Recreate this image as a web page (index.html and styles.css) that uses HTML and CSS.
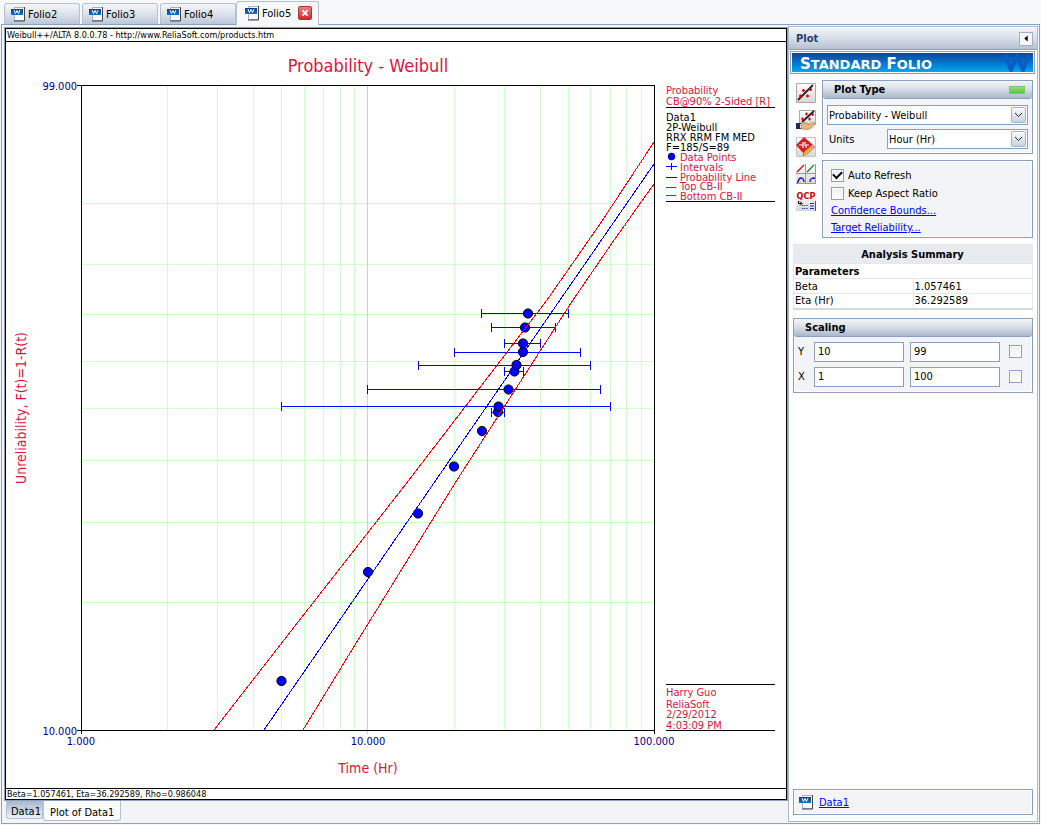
FILE: index.html
```html
<!DOCTYPE html>
<html lang="en">
<head>
  <meta charset="UTF-8" />
  <meta name="viewport" content="width=device-width, initial-scale=1.0"/>
  <title>Weibull++ - Folio5</title>
  <link rel="stylesheet" href="styles.css">
</head>
<body>

  <!-- Shared icons -->
  <svg class="defs" width="0" height="0" aria-hidden="true">
    <defs>
      <linearGradient id="tile" x1="0" y1="0" x2="0" y2="1">
        <stop offset="0" stop-color="#fff"/>
        <stop offset="1" stop-color="#d6d6d6"/>
      </linearGradient>
      <linearGradient id="bluePage" x1="0" y1="0" x2="0" y2="1">
        <stop offset="0" stop-color="#0b3d80"/>
        <stop offset="1" stop-color="#1176c4"/>
      </linearGradient>
      <symbol id="doc" viewBox="0 0 14 16">
        <path d="M3.5 1.5h10v13h-10z" fill="#f6f8fa" stroke="#a9b4be"/>
        <path d="M13.5 1v14H3" fill="none" stroke="#444"/>
        <path d="M0 3h12v6H0z" fill="url(#bluePage)"/>
        <path d="M3 4l1.5 3.500L6 4.500l1.500 3L9 4" fill="none" stroke="#fff"/>
      </symbol>
      <symbol id="line-plot" viewBox="0 0 20 20">
        <path d="M.5.5h19v19H.5z" fill="url(#tile)" stroke="#a9a9a9"/>
        <path d="M2 17L17 2" stroke="#222" stroke-width="1.800"/>
        <path d="M3 13h3M4.500 11.500v3M10 13h3M11.500 11.500v3M6 7.500h3M7.500 6v3M13 6.500h3M14.500 5v3" stroke="#e00000" stroke-width="1.300"/>
      </symbol>
    </defs>
  </svg>

  <div class="tabs">
    <button class="tab"><svg class="doc"><use href="#doc"/></svg>Folio2</button>
    <button class="tab"><svg class="doc"><use href="#doc"/></svg>Folio3</button>
    <button class="tab"><svg class="doc"><use href="#doc"/></svg>Folio4</button>
    <div class="tab active">
      <svg class="doc"><use href="#doc"/></svg>Folio5
      <button class="close" aria-label="Close">
        <svg viewBox="0 0 14 14"><path d="M4 4l6 6M10 4l-6 6" stroke="#fff" stroke-width="2"/></svg>
      </button>
    </div>
  </div>

  <div class="window">
    <div class="sheet">
      <div class="plot">
        <div class="plot-head">Weibull++/ALTA 8.0.0.78 - http://www.ReliaSoft.com/products.htm</div>
        <svg class="chart" viewBox="6 42 779 746" preserveAspectRatio="xMinYMin meet">
          <text class="title" x="368" y="72" text-anchor="middle">Probability - Weibull</text>

          <!-- grid -->
          <path class="grid" d="M167.5 86V730M217.5 86V730M253.5 86V730M281.5 86V730M304.5 86V730M323.5 86V730M340.5 86V730M354.5 86V730M454.5 86V730M504.5 86V730M540.5 86V730M568.5 86V730M590.5 86V730M610.5 86V730M626.500 86V730M641.500 86V730"/>
          <path class="grid" d="M82 203.500H654M82 264.500H654M82 314.500H654M82 361.500H654M82 408.500H654M82 460.500H654M82 522.500H654M82 602.500H654"/>
          <path class="decade" d="M367.500 86V734"/>
          <path class="axis" d="M77 85.500H654.500V734M81.500 85V734M77 730.500H655"/>

          <!-- intervals -->
          <path class="interval" d="M481.500 313.500H568.500M481.500 309V318M568.500 309V318
            M491.500 327.500H555.500M491.500 323V332M555.500 323V332
            M504.500 343.500H540.500M504.500 339V348M540.500 339V348
            M454.500 352.500H580.500M454.500 348V357M580.500 348V357
            M418.500 365.500H590.500M418.500 361V370M590.500 361V370
            M504.500 371.500H523.500M504.500 367V376M523.500 367V376
            M367.500 389.500H600.500M367.500 385V394M600.500 385V394
            M281.500 406.500H610.500M281.500 402V411M610.500 402V411
            M491.500 412.500H504.500M491.500 408V417M504.500 408V417"/>

          <g class="points">
            <circle cx="281.500" cy="681" r="4.600"/>
            <circle cx="368" cy="572" r="4.600"/>
            <circle cx="418" cy="513.500" r="4.600"/>
            <circle cx="454" cy="466.500" r="4.600"/>
            <circle cx="482" cy="431" r="4.600"/>
            <circle cx="498" cy="412" r="4.600"/>
            <circle cx="498.500" cy="406.500" r="4.600"/>
            <circle cx="508.500" cy="389.500" r="4.600"/>
            <circle cx="514.500" cy="371.500" r="4.600"/>
            <circle cx="516.500" cy="365" r="4.600"/>
            <circle cx="523" cy="352" r="4.600"/>
            <circle cx="523" cy="343.500" r="4.600"/>
            <circle cx="525" cy="327.500" r="4.600"/>
            <circle cx="528" cy="313.500" r="4.600"/>
          </g>

          <!-- probability line and bounds -->
          <polyline class="bound" points="214,730 284,640 409,480 547,300 600,224 654,142"/>
          <polyline class="prob" points="264,730 326,640 436,480 560,300 654,164"/>
          <polyline class="bound" points="303,730 358,640 457,480 573,300 612,243 654,184"/>

          <g class="tick">
            <text x="77" y="90" text-anchor="end">99.000</text>
            <text x="77" y="735" text-anchor="end">10.000</text>
            <text x="81" y="745" text-anchor="middle">1.000</text>
            <text x="368" y="745" text-anchor="middle">10.000</text>
            <text x="654" y="745" text-anchor="middle">100.000</text>
          </g>
          <text class="label" x="368" y="773" text-anchor="middle">Time (Hr)</text>
          <text class="label" transform="translate(26 408) rotate(-90)" text-anchor="middle">Unreliability, F(t)=1-R(t)</text>

          <!-- legend -->
          <path class="axis" d="M666 107.500H775M666 201.500H775M666 684.500H775M666 730.500H775"/>
          <g class="legend">
            <text x="666" y="94">Probability</text>
            <text x="666" y="105">CB@90% 2-Sided [R]</text>
            <g class="dark">
              <text x="666" y="121">Data1</text>
              <text x="666" y="131">2P-Weibull</text>
              <text x="666" y="141">RRX RRM FM MED</text>
              <text x="666" y="151">F=185/S=89</text>
            </g>
            <text x="680" y="161">Data Points</text>
            <text x="680" y="171">Intervals</text>
            <text x="680" y="181">Probability Line</text>
            <text x="680" y="190">Top CB-II</text>
            <text x="680" y="200">Bottom CB-II</text>
            <text x="666" y="696">Harry Guo</text>
            <text x="666" y="708">ReliaSoft</text>
            <text x="666" y="718">2/29/2012</text>
            <text x="666" y="729">4:03:09 PM</text>
          </g>
          <circle cx="671.500" cy="156.500" r="3.500" fill="#00f" stroke="#000" stroke-width=".5"/>
          <path class="interval" d="M666 166.500H677M671.500 163V170M666 177.500H677"/>
          <path class="key-bound" d="M666 187.500H676M666 195.500H676"/>
        </svg>
        <div class="plot-foot">Beta=1.057461, Eta=36.292589, Rho=0.986048</div>
      </div>
      <div class="sheet-tabs">
        <button class="sheet-tab">Data1</button>
        <button class="sheet-tab current">Plot of Data1</button>
      </div>
    </div>

    <div class="side">
      <div class="side-head">
        <span>Plot</span>
        <button class="collapse" aria-label="Collapse"><svg viewBox="0 0 14 14"><path d="M9 3v7L5 6.500z"/></svg></button>
      </div>
      <div class="banner">
        <span class="banner-text">S<small>TANDARD</small> F<small>OLIO</small></span>
        <svg class="banner-mark" viewBox="0 0 28 18" aria-hidden="true"><path d="M2 1l6 15L14 2l6 14 6-15" fill="none" stroke="#0a5cc8" stroke-width="4"/></svg>
      </div>

      <div class="controls">
        <div class="tools">
          <button class="tool" aria-label="Plot"><svg viewBox="0 0 20 20"><use href="#line-plot"/></svg></button>
          <button class="tool" aria-label="Send plot">
            <svg viewBox="0 0 20 20">
              <path d="M3.500.500h16v14h-16z" fill="url(#tile)" stroke="#a9a9a9"/>
              <path d="M6 12L18 1" stroke="#222" stroke-width="1.800"/>
              <path d="M5 9h3M6.500 7.500v3M12 9h3M13.500 7.500v3M9 4h3M10.500 2.500v3M15 4.500h3M16.500 3v3" stroke="#e00000" stroke-width="1.200"/>
              <path d="M0 13h5v6H0z" fill="#1d2a5c"/>
              <path d="M4 14h2v4H4z" fill="#fff"/>
              <path d="M5 14l4-1.500 4 2 4-2 2 1-3 4-4 2-7-.5z" fill="#e9b77c" stroke="#a86f38" stroke-width=".6"/>
            </svg>
          </button>
          <button class="tool" aria-label="Plot setup">
            <svg viewBox="0 0 20 20">
              <path d="M.5.500h19v19H.500z" fill="url(#tile)" stroke="#c4c4c4"/>
              <path d="M8 0l9 8-9 9-8-9z" fill="#d11f27"/>
              <path d="M3 8h4V5M7 11V8M9 5v3h4M10 8v3" fill="none" stroke="#fff" stroke-width="1.200"/>
              <path d="M16 8l3 2-8 7-4 2 1-4z" fill="#f7b23c" stroke="#a56a24" stroke-width=".6"/>
              <path d="M16 8l3 2-2 2-3-2z" fill="#e88c8c"/>
            </svg>
          </button>
          <button class="tool" aria-label="Multiple plots">
            <svg viewBox="0 0 20 20">
              <path d="M0 0h20v20H0z" fill="url(#tile)"/>
              <path d="M9.500 0v20M0 9.500h20M19.500 0v20M0 19.500h20" stroke="#999"/>
              <path d="M1 8l7-7" stroke="#e00000" stroke-width="1.200"/>
              <path d="M11 8l7-7" stroke="#108020" stroke-width="1.200"/>
              <path d="M1 18h1c1-4 2-4 3-4s3 1 3 4M14 18c0-3 1-4 5-4" fill="none" stroke="#1010c0" stroke-width="1.300"/>
            </svg>
          </button>
          <button class="tool" aria-label="QCP">
            <svg viewBox="0 0 20 20">
              <path d="M0 0h20v20H0z" fill="url(#tile)"/>
              <text class="qcp" x="10" y="8" text-anchor="middle">QCP</text>
              <path d="M2.500 10v2.500H6M4 10.500l2 2-2 2" fill="none" stroke="#000"/>
              <path d="M6 14.500h6M6 17.500h6" stroke="#2030a0" stroke-width="1.200" stroke-dasharray="1.200 1"/>
              <path d="M14 12.500h4M14 15h4M14 17.500h4" stroke="#2030a0"/>
              <path d="M19.500 10v10" stroke="#555"/>
            </svg>
          </button>
        </div>

        <div class="groups">
          <div class="group">
            <div class="group-head">Plot Type<span class="led"></span></div>
            <div class="group-body">
              <div class="select">
                <select aria-label="Plot type"><option>Probability - Weibull</option></select>
                <span class="arrow"><svg viewBox="0 0 13 13"><path d="M3 5l3.500 3.500L10 5" fill="none" stroke="#222"/></svg></span>
              </div>
              <div class="units">
                <label for="units">Units</label>
                <div class="select">
                  <select id="units"><option>Hour (Hr)</option></select>
                  <span class="arrow"><svg viewBox="0 0 13 13"><path d="M3 5l3.500 3.500L10 5" fill="none" stroke="#222"/></svg></span>
                </div>
              </div>
            </div>
          </div>
          <div class="group options">
            <label><input type="checkbox" checked>Auto Refresh</label>
            <label><input type="checkbox">Keep Aspect Ratio</label>
            <a href="#">Confidence Bounds...</a>
            <a href="#">Target Reliability...</a>
          </div>
        </div>
      </div>

      <table class="summary">
        <thead>
          <tr><th class="caption" colspan="2">Analysis Summary</th></tr>
          <tr><th colspan="2">Parameters</th></tr>
        </thead>
        <tbody>
          <tr><td>Beta</td><td>1.057461</td></tr>
          <tr><td>Eta (Hr)</td><td>36.292589</td></tr>
        </tbody>
      </table>

      <div class="group scaling">
        <div class="group-head">Scaling</div>
        <div class="scale-grid">
          <label for="ymin">Y</label>
          <input type="text" id="ymin" value="10">
          <input type="text" value="99" aria-label="Y maximum">
          <input type="checkbox" aria-label="Lock Y">
          <label for="xmin">X</label>
          <input type="text" id="xmin" value="1">
          <input type="text" value="100" aria-label="X maximum">
          <input type="checkbox" aria-label="Lock X">
        </div>
      </div>

      <div class="source">
        <svg class="doc"><use href="#doc"/></svg>
        <a href="#">Data1</a>
      </div>
    </div>
  </div>

</body>
</html>
```
FILE: styles.css
```css
* {
  box-sizing: border-box;
}

body {
  margin: 0;
  padding: 1px;
  height: 100vh;
  display: flex;
  flex-direction: column;
  background-color: #f7f8fa;
  font-family: Tahoma, "DejaVu Sans Condensed", "DejaVu Sans", sans-serif;
  font-stretch: condensed;
  font-size: 11px;
  color: #000;
}

button,
input,
select {
  font: inherit;
  color: inherit;
}

a {
  color: #00f;
}

.defs {
  position: absolute;
}

.doc {
  width: 14px;
  height: 16px;
  flex: none;
}

/* Folio tabs */
.tabs {
  display: flex;
  align-items: flex-end;
  gap: 2px;
  height: 23px;
  padding-left: 3px;
}

.tab {
  display: flex;
  align-items: center;
  gap: 3px;
  width: 76px;
  height: 21px;
  padding: 0 6px;
  border: 1px solid #b5c1d3;
  border-bottom: none;
  border-radius: 3px 3px 0 0;
  background: linear-gradient(#f4f6f9, #dce2eb 50%, #bcc7d8);
}

.tab.active {
  width: 83px;
  height: 24px;
  margin: 0 0 -1px -2px;
  padding: 0 6px 1px 8px;
  background: #f7f8fa;
  z-index: 1;
}

.close {
  width: 14px;
  height: 14px;
  margin-left: auto;
  padding: 0;
  border: 1px solid #a33;
  border-radius: 2px;
  background: linear-gradient(#e98080, #cf2b2b);
}

.close svg {
  display: block;
}

/* Window frame */
.window {
  flex: 1;
  min-height: 0;
  display: flex;
  padding: 1px;
  border: 1px solid #8ba0bc;
  background: #f2f4f7;
}

.sheet {
  flex: 1;
  min-width: 0;
  display: flex;
  flex-direction: column;
}

.plot {
  flex: 1;
  min-height: 0;
  display: flex;
  flex-direction: column;
  border: 1px solid #000;
  outline: 1px solid #8ba0bc;
  margin: 2px 1px 1px 2px;
  background: #fff;
}

.plot-head,
.plot-foot {
  height: 13px;
  padding-left: 1px;
  font-size: 9px;
  line-height: 12px;
  border-bottom: 1px solid #000;
}

.plot-foot {
  height: 11px;
  line-height: 10px;
  border-top: 1px solid #000;
  border-bottom: none;
}

.chart {
  flex: 1;
  min-height: 0;
  width: 100%;
}

.title {
  font-size: 18px;
  fill: #dc143c;
}

.label {
  font-size: 14px;
  fill: #dc143c;
}

.tick {
  font-size: 11px;
  fill: #00008b;
}

.legend {
  font-size: 11px;
  fill: #dc143c;
}

.dark {
  fill: #000;
}

.grid,
.decade,
.axis,
.interval,
.key-bound {
  fill: none;
  stroke: #d0fcd0;
  shape-rendering: crispEdges;
}

.decade {
  stroke: #fbb;
}

.axis {
  stroke: #000;
}

.interval {
  stroke: #00f;
}

.key-bound {
  stroke: #f00;
}

.points circle {
  fill: #00f;
  stroke: #000;
}

.bound,
.prob {
  fill: none;
  stroke: #f00;
  shape-rendering: crispEdges;
}

.prob {
  stroke: #00f;
}

/* Tabs under the plot */
.sheet-tabs {
  display: flex;
  height: 21px;
  padding-left: 3px;
}

.sheet-tab {
  height: 18px;
  padding: 3px 1px 0 4px;
  border: 1px solid #b5c1d3;
  border-top: none;
  border-radius: 0 0 3px 3px;
  background: linear-gradient(#a9b7cc, #eef1f5);
}

.sheet-tab.current {
  height: 20px;
  padding: 3px 6px 0;
  background: #fafbfc;
}

/* Side panel */
.side {
  width: 250px;
  flex: none;
  display: flex;
  flex-direction: column;
  padding: 1px 0 6px;
  border: 1px solid #a9b9ce;
  background: #fff;
}

.side-head {
  display: flex;
  align-items: center;
  justify-content: space-between;
  height: 22px;
  flex: none;
  padding: 0 4px 0 7px;
  font-weight: bold;
  color: #1e3f6e;
  background: linear-gradient(#f2f4f7, #d8dee8 50%, #b4c0d2);
  border-bottom: 1px solid #8ba0bc;
}

.collapse {
  width: 14px;
  height: 14px;
  padding: 0;
  border: 1px solid #9fb0c8;
  background: #f4f6fa;
}

.collapse svg {
  display: block;
}

.banner {
  display: flex;
  align-items: center;
  justify-content: space-between;
  height: 23px;
  flex: none;
  margin: 1px 2px 0 1px;
  padding: 0 3px 0 9px;
  border: 1px solid #8ba0bc;
  outline: 1px solid #fff;
  outline-offset: -2px;
  background: linear-gradient(#0d3f92, #0579cf 55%, #00aef0);
  color: #fff;
}

.banner-text {
  padding-top: 3px;
  font-family: "DejaVu Sans", sans-serif;
  font-stretch: normal;
  font-weight: bold;
  font-size: 15px;
  line-height: 17px;
}

.banner-text small {
  font-size: 13px;
}

.banner-mark {
  width: 28px;
  height: 18px;
}

.controls {
  display: flex;
  gap: 6px;
  padding: 6px 4px 0 7px;
}

.tools {
  display: flex;
  flex-direction: column;
  gap: 7px;
  padding-top: 3px;
}

.tool {
  width: 20px;
  height: 20px;
  padding: 0;
  border: none;
  background: none;
}

.tool svg {
  display: block;
}

.qcp {
  font: bold 9px "DejaVu Sans Condensed", sans-serif;
  font-stretch: condensed;
  fill: #d00000;
}

.groups {
  flex: 1;
  min-width: 0;
  display: flex;
  flex-direction: column;
  gap: 6px;
}

.group {
  border: 1px solid #8ba0bc;
  background: #f2f4f7;
  box-shadow: inset 0 0 0 1px #fff;
}

.group-head {
  display: flex;
  align-items: center;
  justify-content: space-between;
  height: 18px;
  padding: 0 7px 0 11px;
  font-weight: bold;
  border-bottom: 1px solid #8ba0bc;
  border-radius: 3px;
  background: linear-gradient(#f4f6f8, #d6dde6 50%, #aab8cb);
}

.led {
  width: 16px;
  height: 8px;
  border: 1px solid #7cc56a;
  background: linear-gradient(#8fe07a, #5cc444);
}

.group-body {
  display: flex;
  flex-direction: column;
  gap: 4px;
  padding: 6px 4px 4px;
}

.select {
  position: relative;
  flex: 1;
}

.select select {
  display: block;
  width: 100%;
  height: 20px;
  padding: 0 18px 0 1px;
  border: 1px solid #8ba0bc;
  border-radius: 0;
  background: #fff;
  appearance: none;
}

.arrow {
  position: absolute;
  top: 2px;
  right: 2px;
  width: 15px;
  height: 16px;
  border: 1px solid #a5b4ca;
  border-radius: 2px;
  background: linear-gradient(#f8f9fb, #c9d2e0);
  pointer-events: none;
}

.arrow svg {
  display: block;
}

.units {
  display: flex;
  align-items: center;
}

.units label {
  width: 60px;
  padding-left: 2px;
}

.options {
  display: flex;
  flex-direction: column;
  align-items: flex-start;
  gap: 4px;
  height: 78px;
  padding: 7px 8px 0;
}

.options label {
  display: flex;
  align-items: center;
  gap: 4px;
  height: 14px;
}

.options a {
  line-height: 13px;
}

input[type="checkbox"] {
  width: 13px;
  height: 13px;
  margin: 0;
  display: grid;
  place-items: center;
  border: 1px solid #8ba0bc;
  background: linear-gradient(#e9ecf1, #fff);
  box-shadow: inset 0 0 0 1px #fff;
  appearance: none;
}

input[type="checkbox"]:checked::before {
  content: "";
  width: 7px;
  height: 4px;
  margin-bottom: 2px;
  border: solid #000;
  border-width: 0 0 2px 2px;
  transform: rotate(-45deg);
}

/* Analysis summary */
.summary {
  width: calc(100% - 8px);
  margin: 6px 4px 0;
  border: 1px solid #d5dae1;
  border-bottom-width: 2px;
  border-collapse: collapse;
  table-layout: fixed;
}

.summary th,
.summary td {
  height: 15px;
  padding: 0 2px 0 1px;
  line-height: 13px;
  text-align: left;
  border: 1px solid #e4e7ec;
}

.summary th.caption {
  height: 19px;
  text-align: center;
  background: #e7eaef;
}

.scaling {
  margin: 8px 4px 0;
}

.scale-grid {
  display: grid;
  grid-template-columns: 10px 1fr 1fr 16px;
  align-items: center;
  gap: 5px 6px;
  padding: 5px 10px 5px 4px;
}

.scale-grid input[type="text"] {
  width: 100%;
  min-width: 0;
  height: 20px;
  padding: 0 3px;
  border: 1px solid #8ba0bc;
  background: #fff;
}

.scale-grid input[type="checkbox"] {
  justify-self: end;
}

.source {
  display: flex;
  align-items: center;
  gap: 6px;
  height: 26px;
  margin: auto 4px 0;
  padding-left: 5px;
  border: 1px solid #8ba0bc;
  background: #f2f4f7;
  box-shadow: inset 0 0 0 1px #fff;
}
```
